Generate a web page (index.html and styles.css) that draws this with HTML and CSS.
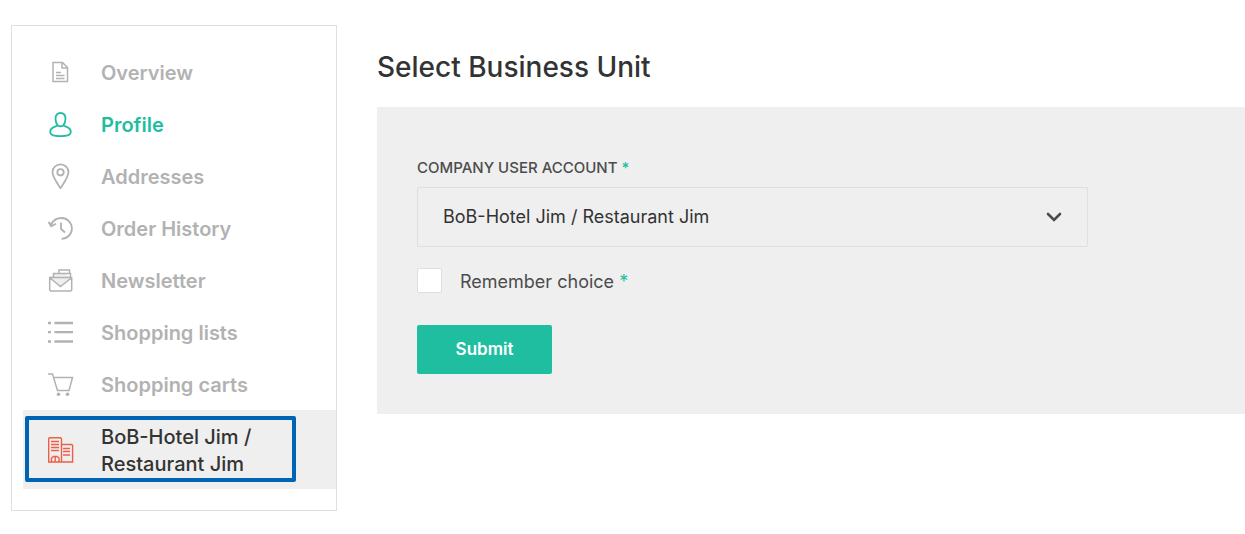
FILE: index.html
```html
<!DOCTYPE html>
<html lang="en">
<head>
<meta charset="utf-8">
<title>Select Business Unit</title>
<link rel="stylesheet" href="styles.css">
</head>
<body>
<div class="page">
  <nav class="sidebar" aria-label="Customer account">
    <ul class="menu">
      <li><a class="menu-link" href="#">
        <svg class="icon" viewBox="0 0 26 26"><path d="M5 3.500h9.500l5 5v14h-14.500zM14 3.500v5.500h5.500M8 13.500h5M8 16.500h8.500M8 19.500h8.500"/></svg>
        <span class="menu-text">Overview</span></a></li>
      <li><a class="menu-link is-current" href="#">
        <svg class="icon icon-bold" viewBox="0 0 26 26"><path d="M9.800 14.500C8.300 13 7.500 10.500 7.500 7.800C7.500 4 9.600 2 12.500 2S17.500 4 17.500 7.800C17.500 10.500 16.700 13 15.200 14.500Q12.500 16 9.800 14.500C7 16 2.200 16 2.200 21C2.200 24 6.500 25.200 12.500 25.200S22.800 24 22.800 21C22.800 16 18 16 15.200 14.500"/></svg>
        <span class="menu-text">Profile</span></a></li>
      <li><a class="menu-link" href="#">
        <svg class="icon icon-bold" viewBox="0 0 26 26"><path d="M12.500 25.300C9 19.500 4.500 14 4.500 9a8 7.700 0 0 1 16 0C20.500 14 16 19.500 12.500 25.300z"/><circle cx="12.500" cy="9.300" r="3.200"/></svg>
        <span class="menu-text">Addresses</span></a></li>
      <li><a class="menu-link" href="#">
        <svg class="icon icon-bold" viewBox="0 0 26 26"><path d="M3.500 9C5.500 5 9 3 13.500 3a10.300 10.300 0 0 1 0 20.800M.5 7l2.700 4.200 4.800-2.500M2 8l2 2.500M13 7.500V14l4 3.500"/></svg>
        <span class="menu-text">Order History</span></a></li>
      <li><a class="menu-link" href="#">
        <svg class="icon" viewBox="0 0 26 26"><path class="tint" d="M6 9V6h13v3h4v3l-10.500 8L2 12V9z"/><path class="paper" d="M2 10.500l10.500 8.500L23 10.500v13H2z"/><path d="M1.700 10.500h22v12.500l-1 1H2.700l-1-1zM2 11l10.500 8.500L23.300 11M5.500 10V6.500h17V10M11 6V3h10.500v3.500"/></svg>
        <span class="menu-text">Newsletter</span></a></li>
      <li><a class="menu-link" href="#">
        <svg class="icon icon-list" viewBox="0 0 26 26"><path d="M0 4h3M6.500 4H25M0 13.200h3M6.500 13.200H25M0 22.500h3M6.500 22.500H25"/></svg>
        <span class="menu-text">Shopping lists</span></a></li>
      <li><a class="menu-link" href="#">
        <svg class="icon" viewBox="0 0 26 26"><path d="M0 3h4.500L9.500 19.500H21L24.500 6.500H5.500"/><circle class="solid" cx="10.500" cy="23.200" r="1.800"/><circle class="solid" cx="19.500" cy="23.200" r="1.800"/></svg>
        <span class="menu-text">Shopping carts</span></a></li>
      <li class="unit"><a class="menu-link unit-link" href="#">
        <svg class="icon icon-unit" viewBox="0 0 26 26"><path d="M1.500.7h11l1 1v23.300H.7V1.500zM13.500 7.500h10.300l.8 1v16.500H13.500M3 4.500h8M3 7.500h8M3 10.500h8M3 13.500h8M15 11.500h7M15 14.500h7M15 18h7M3.500 25v-4l2-1.500h3.500l2 1.500v4M7.200 19.500V25"/></svg>
        <span class="menu-text">BoB-Hotel Jim / Restaurant Jim</span></a></li>
    </ul>
  </nav>
  <main class="content">
    <h1 class="title">Select Business Unit</h1>
    <form class="panel">
      <label class="field-label" for="account">Company user account <span class="required">*</span></label>
      <div class="select-wrap">
        <select class="select" id="account">
          <option>BoB-Hotel Jim / Restaurant Jim</option>
        </select>
        <svg class="chevron" viewBox="0 0 16 10"><path d="M2 2l6 6 6-6"/></svg>
      </div>
      <div class="check-row">
        <input class="checkbox" type="checkbox" id="remember">
        <label class="check-label" for="remember">Remember choice <span class="required">*</span></label>
      </div>
      <button class="submit" type="submit">Submit</button>
    </form>
  </main>
</div>
</body>
</html>
```
FILE: styles.css
```css
* { box-sizing: border-box; }
body {
  margin: 0;
  background: #fff;
  color: #333;
  font-family: Inter, "Liberation Sans", sans-serif;
}
.page {
  display: flex;
  align-items: flex-start;
  gap: 40px;
  padding: 25px 0 24px 11px;
}
.sidebar {
  flex: 0 0 326px;
  padding: 20px 0 21px 11px;
  border: 1px solid #dce0e0;
}
.menu { margin: 0; padding: 0; list-style: none; }
.menu-link {
  display: flex;
  align-items: center;
  gap: 27px;
  min-height: 52px;
  padding: 0 40px 0 25px;
  color: #b2b2b2;
  font-size: 20px;
  font-weight: 600;
  line-height: 27px;
  text-decoration: none;
}
.menu-link.is-current { color: #1fbea0; }
.menu-text { padding-top: 2px; }
.icon {
  flex: none;
  width: 26px;
  height: 26px;
  fill: none;
  stroke: currentColor;
  stroke-width: 1.5;
}
.icon-bold { stroke-width: 1.8; }
.icon-list { stroke-width: 2.3; }
.icon-unit { color: #ed5f48; stroke-width: 1.4; }
.solid { fill: currentColor; stroke: none; }
.tint { fill: #eee; stroke: none; }
.paper { fill: #fff; stroke: none; }
.unit { position: relative; background: #efefef; }
.unit::after {
  content: "";
  position: absolute;
  inset: 6px 40px 7px 2px;
  border: 4px solid #0064b4;
  border-radius: 2px;
  pointer-events: none;
}
.unit-link { min-height: 79px; color: #333; font-weight: 500; }
.content { flex: 1; min-width: 0; }
.title {
  margin: 22px 0 20px;
  font-size: 28px;
  font-weight: 500;
  line-height: 40px;
}
.panel {
  padding: 51px 157px 40px 40px;
  background: #efefef;
}
.field-label {
  display: block;
  margin-bottom: 9px;
  color: #4c4c4c;
  font-size: 15px;
  font-weight: 500;
  line-height: 20px;
  text-transform: uppercase;
}
.required { color: #1fbea0; }
.select-wrap { position: relative; }
.select {
  display: block;
  width: 100%;
  height: 60px;
  padding: 0 60px 2px 25px;
  appearance: none;
  border: 1px solid #dce0e0;
  border-radius: 2px;
  background: transparent;
  color: #333;
  font: 400 18px Inter, sans-serif;
}
.chevron {
  position: absolute;
  top: 25px;
  right: 26px;
  width: 16px;
  height: 10px;
  fill: none;
  stroke: #4c4c4c;
  stroke-width: 2.6;
  stroke-linecap: round;
  pointer-events: none;
}
.check-row {
  display: flex;
  align-items: center;
  gap: 18px;
  margin: 20px 0 31px;
  color: #4c4c4c;
  font-size: 18px;
  line-height: 25px;
}
.check-label { padding-top: 2px; }
.checkbox {
  width: 25px;
  height: 25px;
  margin: 0;
  appearance: none;
  border: 1px solid #dce0e0;
  border-radius: 2px;
  background: #fff;
}
.checkbox:checked { background: #1fbea0; }
.submit {
  display: block;
  min-width: 135px;
  height: 49px;
  padding: 0 30px 2px;
  border: 0;
  border-radius: 2px;
  background: #1fbea0;
  color: #fff;
  font: 600 17px Inter, sans-serif;
}
```
